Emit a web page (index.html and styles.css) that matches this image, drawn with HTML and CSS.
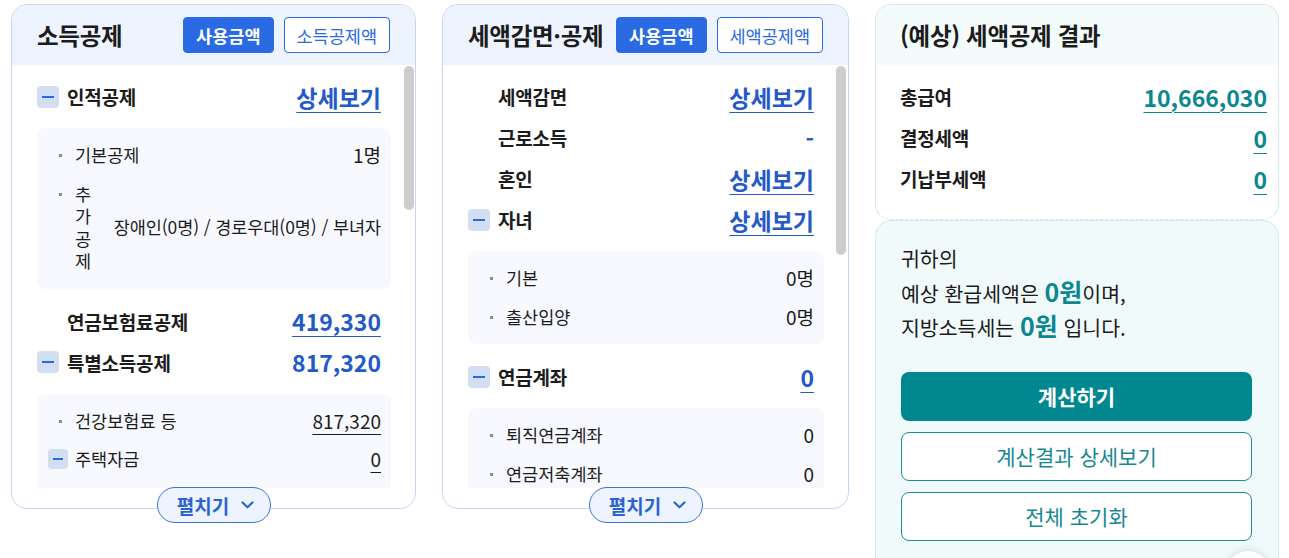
FILE: index.html
```html
<!DOCTYPE html>
<html lang="ko">
<head>
    <meta charset="UTF-8">
    <meta name="viewport" content="width=device-width, initial-scale=1.0">
    <title>연말정산 미리보기</title>
    <link rel="stylesheet" href="styles.css">
</head>
<body>

    <div class="board">

        <!-- 소득공제 -->
        <section class="panel">
            <div class="panel-head">
                <h2 class="panel-title">소득공제</h2>
                <button class="tab active">사용금액</button>
                <button class="tab">소득공제액</button>
            </div>
            <div class="panel-scroll">
                <div class="row">
                    <span class="toggle"></span>
                    <span class="row-label">인적공제</span>
                    <a class="link">상세보기</a>
                </div>
                <div class="sub">
                    <div class="item">
                        <span class="item-label">기본공제</span>
                        <span class="item-value">1명</span>
                    </div>
                    <div class="item">
                        <span class="item-label stacked">추가공제</span>
                        <span class="item-value long">장애인(0명) / 경로우대(0명) / 부녀자</span>
                    </div>
                </div>
                <div class="row">
                    <span class="row-label indent">연금보험료공제</span>
                    <a class="link">419,330</a>
                </div>
                <div class="row">
                    <span class="toggle"></span>
                    <span class="row-label">특별소득공제</span>
                    <span class="amount">817,320</span>
                </div>
                <div class="sub sub-cut">
                    <div class="item">
                        <span class="item-label">건강보험료 등</span>
                        <a class="item-value num-link">817,320</a>
                    </div>
                    <div class="item has-toggle">
                        <span class="toggle small"></span>
                        <span class="item-label">주택자금</span>
                        <a class="item-value num-link">0</a>
                    </div>
                </div>
                <div class="thumb thumb-1"></div>
            </div>
            <button class="expand">펼치기
                <svg width="13" height="8" viewBox="0 0 13 8"><polyline points="1.5,1.5 6.5,6.2 11.5,1.5" fill="none" stroke="currentColor" stroke-width="2.2" stroke-linecap="round" stroke-linejoin="round"/></svg>
            </button>
        </section>

        <!-- 세액감면·공제 -->
        <section class="panel">
            <div class="panel-head">
                <h2 class="panel-title">세액감면·공제</h2>
                <button class="tab active">사용금액</button>
                <button class="tab">세액공제액</button>
            </div>
            <div class="panel-scroll">
                <div class="row">
                    <span class="row-label indent">세액감면</span>
                    <a class="link">상세보기</a>
                </div>
                <div class="row">
                    <span class="row-label indent">근로소득</span>
                    <span class="amount">-</span>
                </div>
                <div class="row">
                    <span class="row-label indent">혼인</span>
                    <a class="link">상세보기</a>
                </div>
                <div class="row">
                    <span class="toggle"></span>
                    <span class="row-label">자녀</span>
                    <a class="link">상세보기</a>
                </div>
                <div class="sub">
                    <div class="item">
                        <span class="item-label">기본</span>
                        <span class="item-value">0명</span>
                    </div>
                    <div class="item">
                        <span class="item-label">출산입양</span>
                        <span class="item-value">0명</span>
                    </div>
                </div>
                <div class="row">
                    <span class="toggle"></span>
                    <span class="row-label">연금계좌</span>
                    <a class="link">0</a>
                </div>
                <div class="sub">
                    <div class="item">
                        <span class="item-label">퇴직연금계좌</span>
                        <span class="item-value">0</span>
                    </div>
                    <div class="item">
                        <span class="item-label">연금저축계좌</span>
                        <span class="item-value">0</span>
                    </div>
                </div>
                <div class="thumb thumb-2"></div>
            </div>
            <button class="expand">펼치기
                <svg width="13" height="8" viewBox="0 0 13 8"><polyline points="1.5,1.5 6.5,6.2 11.5,1.5" fill="none" stroke="currentColor" stroke-width="2.2" stroke-linecap="round" stroke-linejoin="round"/></svg>
            </button>
        </section>

        <!-- 결과 -->
        <div class="result-col">
            <section class="card-top">
                <div class="card-head">
                    <h2 class="panel-title">(예상) 세액공제 결과</h2>
                </div>
                <div class="card-body">
                    <div class="row">
                        <span class="row-label">총급여</span>
                        <a class="link teal">10,666,030</a>
                    </div>
                    <div class="row">
                        <span class="row-label">결정세액</span>
                        <a class="link teal">0</a>
                    </div>
                    <div class="row">
                        <span class="row-label">기납부세액</span>
                        <a class="link teal">0</a>
                    </div>
                </div>
            </section>
            <section class="card-bottom">
                <p class="summary">
                    귀하의<br>
                    예상 환급세액은 <strong>0원</strong>이며,<br>
                    지방소득세는 <strong>0원</strong> 입니다.
                </p>
                <div class="actions">
                    <button class="btn btn-primary">계산하기</button>
                    <button class="btn btn-outline">계산결과 상세보기</button>
                    <button class="btn btn-outline">전체 초기화</button>
                </div>
            </section>
        </div>

    </div>

    <button class="fab" aria-label="맨 위로"></button>

</body>
</html>
```

FILE: styles.css
```css
* {
    box-sizing: border-box;
}

body {
    margin: 0;
    padding: 4px 10px 0 11px;
    font-family: "Noto Sans CJK KR", "Noto Sans", sans-serif;
    color: #1c1c1c;
    background-color: #fff;
    overflow: hidden;
}

button {
    font-family: inherit;
    cursor: pointer;
}

.board {
    display: grid;
    grid-template-columns: 405px 407px 404px;
    column-gap: 26px;
    align-items: start;
}

/* 패널 공통 */
.panel {
    position: relative;
    height: 505px;
    border: 1px solid #c5d6f1;
    border-radius: 16px;
}

.panel-head {
    display: flex;
    align-items: center;
    gap: 10px;
    height: 60px;
    padding: 0 25px;
    background-color: #eef4ff;
    border-radius: 15px 15px 0 0;
}

.panel-title {
    margin: 0 auto 0 0;
    font-size: 23.5px;
    font-weight: 700;
    letter-spacing: -0.3px;
    white-space: nowrap;
}

.tab {
    height: 36px;
    padding: 0 12px;
    border: 1px solid #2a6ae3;
    border-radius: 4px;
    background-color: #fff;
    color: #2a6ae3;
    font-size: 17.5px;
    white-space: nowrap;
}

.tab.active {
    background-color: #2a6ae3;
    color: #fff;
    font-weight: 700;
}

.panel-scroll {
    position: relative;
    height: 423px;
    overflow: hidden;
    padding: 11px 24px 0 25px;
}

.thumb {
    position: absolute;
    top: 1px;
    right: 1px;
    width: 10px;
    border-radius: 5px;
    background-color: #cdcdcd;
}

.thumb-1 {
    height: 144px;
}

.thumb-2 {
    right: 2px;
    height: 189px;
}

/* 행 */
.row {
    display: flex;
    align-items: center;
    height: 41px;
    padding-right: 10px;
}

.row-label {
    font-size: 19px;
    font-weight: 700;
    letter-spacing: -0.2px;
}

.row-label.indent {
    padding-left: 30px;
}

.toggle {
    position: relative;
    flex: none;
    width: 22px;
    height: 22px;
    margin-right: 8px;
    border-radius: 4px;
    background-color: #d2def2;
}

.toggle::before {
    content: "";
    position: absolute;
    left: 5px;
    right: 5px;
    top: 10px;
    height: 2px;
    background-color: #2a6ae3;
}

.toggle.small {
    width: 20px;
    height: 20px;
    margin-right: 7px;
}

.toggle.small::before {
    top: 9px;
}

.link,
.amount {
    margin-left: auto;
    font-size: 23px;
    font-weight: 700;
    color: #2459c9;
}

.link {
    text-decoration: underline;
    text-decoration-thickness: 1px;
    text-underline-offset: 5px;
}

.link.teal {
    color: #0b8792;
}

/* 하위 목록 */
.sub {
    margin: 11px 0 12px;
    padding: 8px 10px 8px 0;
    background-color: #f7f9fe;
    border-radius: 8px;
}

.sub-cut {
    padding-bottom: 24px;
}

.item {
    position: relative;
    display: flex;
    align-items: center;
    padding: 8px 0 8px 38px;
    font-size: 17.5px;
    line-height: 22.5px;
}

.item::before {
    content: "";
    position: absolute;
    left: 22px;
    top: 18px;
    width: 3px;
    height: 3px;
    background-color: #8a8a8a;
}

.item.has-toggle {
    padding-left: 11px;
}

.item.has-toggle::before {
    display: none;
}

.item-label.stacked {
    flex: none;
    width: 18px;
}

.item-value {
    margin-left: auto;
    white-space: nowrap;
    font-size: 19px;
}

.item-value.long {
    font-size: 17.5px;
    letter-spacing: -0.1px;
}

.num-link {
    text-decoration: underline;
    text-decoration-thickness: 1px;
    text-underline-offset: 5px;
}

.expand {
    position: absolute;
    left: 50%;
    bottom: -15px;
    transform: translateX(-50%);
    display: flex;
    align-items: center;
    justify-content: center;
    gap: 12px;
    width: 114px;
    height: 36px;
    padding: 0 0 0 4px;
    border: 1px solid #3a72dc;
    border-radius: 18px;
    background-color: #eef4ff;
    color: #2c63d2;
    font-size: 19px;
    font-weight: 700;
}

/* 결과 */
.result-col {
    display: flex;
    flex-direction: column;
}

.card-top {
    height: 216px;
    border: 1px solid #d3e9ec;
    border-bottom-style: dashed;
    border-radius: 16px;
}

.card-head {
    display: flex;
    align-items: center;
    height: 60px;
    padding: 0 24px;
    background-color: #f3fbfb;
    border-radius: 15px 15px 0 0;
}

.card-body {
    padding: 11px 11px 0 24px;
}

.card-body .row {
    padding-right: 0;
}

.card-bottom {
    height: 360px;
    border: 1px solid #d3e9ec;
    border-radius: 16px;
    background-color: #f1fafa;
    padding: 20px 26px 0 25px;
}

.summary {
    margin: 0;
    font-size: 20.5px;
    line-height: 34.5px;
}

.summary strong {
    font-size: 25px;
    line-height: 1;
    color: #0b8792;
}

.actions {
    display: flex;
    flex-direction: column;
    gap: 11px;
    margin-top: 27px;
}

.btn {
    height: 49px;
    border-radius: 8px;
    font-size: 21px;
}

.btn-primary {
    border: none;
    background-color: #00878f;
    color: #fff;
    font-weight: 700;
}

.btn-outline {
    border: 1px solid #1a8c95;
    background-color: #fff;
    color: #178891;
}

.fab {
    position: fixed;
    right: 19px;
    top: 551px;
    width: 44px;
    height: 44px;
    border: none;
    border-radius: 50%;
    background-color: #fff;
    box-shadow: 0 0 8px rgba(0, 0, 0, 0.15);
}
```
